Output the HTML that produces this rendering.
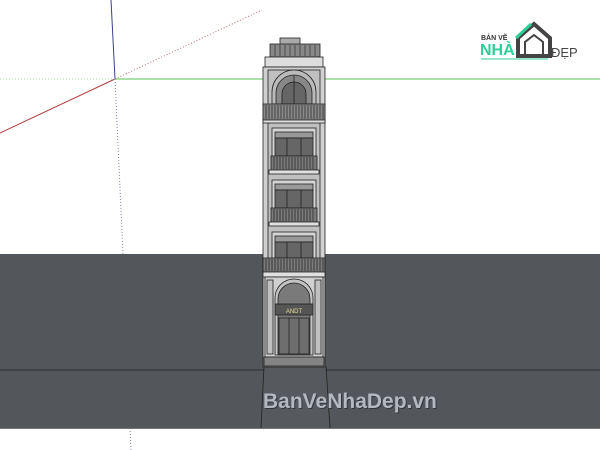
<!DOCTYPE html>
<html><head><style>
html,body{margin:0;padding:0;background:#fff;width:600px;height:450px;overflow:hidden}
</style></head><body>
<svg width="600" height="450" viewBox="0 0 600 450" xmlns="http://www.w3.org/2000/svg" style="position:absolute;left:0;top:0">
<line x1="111" y1="0" x2="115" y2="79" stroke="#3a3f8c" stroke-width="1"/>
<line x1="0" y1="133" x2="115" y2="79" stroke="#b04040" stroke-width="1"/>
<line x1="115" y1="79" x2="600" y2="79" stroke="#8fd68f" stroke-width="1.5"/>
<line x1="0" y1="79" x2="115" y2="79" stroke="#9fd09f" stroke-width="1" stroke-dasharray="1,2"/>
<line x1="115" y1="79" x2="262" y2="10" stroke="#b07070" stroke-width="1" stroke-dasharray="1,2"/>
<line x1="115" y1="79" x2="123" y2="254" stroke="#8080a8" stroke-width="1" stroke-dasharray="1,2"/>
<line x1="130" y1="428" x2="131" y2="450" stroke="#8080a8" stroke-width="1" stroke-dasharray="1,2"/>
<rect x="0" y="254" width="600" height="175" fill="#53565a"/>
<line x1="0" y1="370" x2="600" y2="370" stroke="#2e3033" stroke-width="1"/>
<line x1="0" y1="428.5" x2="600" y2="428.5" stroke="#777" stroke-width="1"/>
<polygon points="264,366 326,366 330,428 262,428" fill="#56595d"/>
<line x1="264" y1="366" x2="261" y2="428" stroke="#222" stroke-width="0.8"/>
<line x1="326" y1="366" x2="330" y2="428" stroke="#222" stroke-width="0.8"/>
<g stroke="#222" stroke-width="0.8">
<rect x="280" y="38" width="20" height="8" fill="#aaa"/>
<rect x="270" y="44" width="50" height="13" fill="#888"/>
<g stroke-width="0.6"><line x1="275" y1="45" x2="275" y2="56"/><line x1="280" y1="45" x2="280" y2="56"/><line x1="285" y1="45" x2="285" y2="56"/><line x1="290" y1="45" x2="290" y2="56"/><line x1="295" y1="45" x2="295" y2="56"/><line x1="300" y1="45" x2="300" y2="56"/><line x1="305" y1="45" x2="305" y2="56"/><line x1="310" y1="45" x2="310" y2="56"/><line x1="315" y1="45" x2="315" y2="56"/></g>
<rect x="265" y="57" width="58" height="10" fill="#ddd"/>
<rect x="263" y="67" width="62" height="300" fill="#d0d0d0"/>
<rect x="268" y="70" width="52" height="290" fill="#c0c0c0"/>
<path d="M272,104 L272,92 A22,22 0 0 1 316,92 L316,104 Z" fill="#bbb"/>
<path d="M276,104 L276,93 A18,18 0 0 1 312,93 L312,104 Z" fill="#888"/>
<path d="M282,104 L282,94 A12,12 0 0 1 306,94 L306,104 Z" fill="#666"/>
<line x1="294" y1="75" x2="294" y2="104"/>
<rect x="263" y="104" width="62" height="16" fill="#8a8a8a"/>
<g stroke-width="0.7"><path d="M266,105V119M269,105V119M272,105V119M275,105V119M278,105V119M281,105V119M284,105V119M287,105V119M290,105V119M293,105V119M296,105V119M299,105V119M302,105V119M305,105V119M308,105V119M311,105V119M314,105V119M317,105V119M320,105V119M323,105V119"/></g>
<rect x="263" y="120" width="62" height="3" fill="#ddd"/>
<g id="fl">
<rect x="272" y="128" width="44" height="42" fill="#d4d4d4"/>
<rect x="275" y="132" width="38" height="6" fill="#999"/>
<rect x="275" y="138" width="38" height="18" fill="#666"/>
<line x1="287" y1="138" x2="287" y2="170"/><line x1="301" y1="138" x2="301" y2="170"/>
<rect x="271" y="156" width="46" height="14" fill="#7a7a7a"/>
<path d="M274,157V169M277,157V169M280,157V169M283,157V169M286,157V169M289,157V169M292,157V169M295,157V169M298,157V169M301,157V169M304,157V169M307,157V169M310,157V169M313,157V169" stroke-width="0.7"/>
<rect x="269" y="170" width="50" height="4" fill="#e0e0e0"/>
</g>
<use href="#fl" y="52"/>
<rect x="272" y="232" width="44" height="40" fill="#d4d4d4"/>
<rect x="275" y="236" width="38" height="6" fill="#999"/>
<rect x="275" y="242" width="38" height="16" fill="#666"/>
<line x1="287" y1="242" x2="287" y2="258"/><line x1="301" y1="242" x2="301" y2="258"/>
<rect x="263" y="258" width="62" height="14" fill="#7a7a7a"/>
<path d="M266,259V271M269,259V271M272,259V271M275,259V271M278,259V271M281,259V271M284,259V271M287,259V271M290,259V271M293,259V271M296,259V271M299,259V271M302,259V271M305,259V271M308,259V271M311,259V271M314,259V271M317,259V271M320,259V271M323,259V271" stroke-width="0.7"/>
<rect x="263" y="272" width="62" height="5" fill="#e0e0e0"/>
<rect x="265" y="277" width="58" height="80" fill="#d0d0d0"/>
<rect x="267" y="280" width="6" height="74" fill="#c0c0c0"/>
<rect x="315" y="280" width="6" height="74" fill="#c0c0c0"/>
<path d="M275,355 L275,298 A19,19 0 0 1 313,298 L313,355 Z" fill="#c4c4c4"/>
<path d="M278,355 L278,299 A16,16 0 0 1 310,299 L310,355 Z" fill="#7a7a7a"/>
<rect x="275" y="304" width="38" height="11" fill="#555"/>
<rect x="279" y="318" width="30" height="36" fill="#6e6e6e"/>
<line x1="289" y1="318" x2="289" y2="354"/><line x1="299" y1="318" x2="299" y2="354"/>
<rect x="264" y="357" width="60" height="9" fill="#848484"/>
</g>
<text x="294" y="313" font-family="Liberation Sans" font-size="6" fill="#e0d890" text-anchor="middle">ANDT</text>
<text x="264" y="409" font-family="Liberation Sans, sans-serif" font-weight="bold" font-size="21" fill="#202224" opacity="0.6">BanVeNhaDep.vn</text>
<text x="263" y="408" font-family="Liberation Sans, sans-serif" font-weight="bold" font-size="21" fill="#b4b9bf">BanVeNhaDep.vn</text>
<text x="481" y="40" font-family="Liberation Sans, sans-serif" font-weight="bold" font-size="7" fill="#333">BẢN VẼ</text>
<text x="480" y="55" font-family="Liberation Sans, sans-serif" font-weight="bold" font-size="16" fill="#2fcf9a">NHÀ</text>
<path d="M518,56 V38 L534,24 L550,38 V56 Z" fill="none" stroke="#444" stroke-width="4"/>
<path d="M525,55 V42 L534,35 L543,42 V55 Z" fill="none" stroke="#444" stroke-width="2"/>
<path d="M516,38 L531,24" stroke="#2fcf9a" stroke-width="3"/>
<text x="551" y="57" font-family="Liberation Sans, sans-serif" font-size="13" fill="#444">ĐẸP</text>
<line x1="481" y1="59" x2="548" y2="59" stroke="#2fcf9a" stroke-width="1"/>
</svg>
</body></html>
